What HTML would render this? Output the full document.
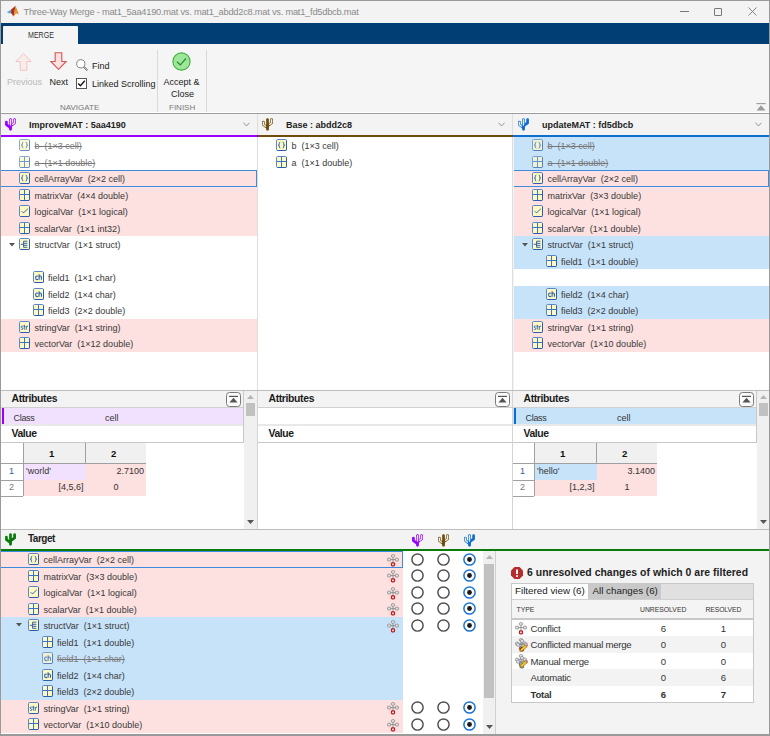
<!DOCTYPE html>
<html><head><meta charset="utf-8">
<style>
html,body{margin:0;padding:0;}
body{width:770px;height:736px;position:relative;overflow:hidden;background:#f3f3f3;font-family:"Liberation Sans", sans-serif;}
.t{position:absolute;white-space:pre;font-size:9px;line-height:12px;color:#222;}
.ab{position:absolute;}
.row{position:absolute;height:16.5px;}
.strike{text-decoration:line-through;color:#6a6a6a;}
</style></head><body>

<div style="position:absolute;left:0px;top:0px;width:770px;height:23px;background:#f3f3f3;"></div>
<div class="t" style="left:23.5px;top:6px;font-size:9.3px;color:#8a8a8a;letter-spacing:-0.245px;">Three-Way Merge - mat1_5aa4190.mat vs. mat1_abdd2c8.mat vs. mat1_fd5dbcb.mat</div>
<svg class="ab" style="left:6px;top:5px" width="14" height="13" viewBox="0 0 14 13">
<path d="M0.8 7.2 L5.2 4.6 L7 7.2 L3.6 8.6 Z" fill="#5aa8e8"/>
<path d="M5.2 4.6 L9.6 0.7 L7.6 11.6 L5 8 Z" fill="#a8321a"/>
<path d="M9.6 0.7 L12.8 9.6 L10 8.2 L7.6 11.6 Z" fill="#ec8a24"/>
</svg>
<div style="position:absolute;left:679.5px;top:11px;width:9px;height:1px;background:#777;"></div>
<div style="position:absolute;left:714px;top:7.5px;width:8px;height:8px;border:1px solid #777;box-sizing:border-box;border-radius:1px;"></div>
<svg class="ab" style="left:747.5px;top:7px" width="9" height="9" viewBox="0 0 9 9"><path d="M0.5 0.5 L8.5 8.5 M8.5 0.5 L0.5 8.5" stroke="#777" stroke-width="0.9"/></svg>
<div style="position:absolute;left:1px;top:23px;width:769px;height:21px;background:#003e74;"></div>
<div style="position:absolute;left:3px;top:25.5px;width:75px;height:19px;background:#f5f5f5;border-radius:1px 1px 0 0;"></div>
<div class="t" style="left:28px;top:28.5px;font-size:9.2px;color:#333;display:inline-block;transform:scaleX(0.77);transform-origin:0 0;">MERGE</div>
<div style="position:absolute;left:1px;top:44px;width:769px;height:69px;background:#f5f5f5;"></div>
<div style="position:absolute;left:157px;top:50px;width:1px;height:63px;background:#d9d9d9;"></div>
<div style="position:absolute;left:206px;top:50px;width:1px;height:63px;background:#d9d9d9;"></div>
<div style="position:absolute;left:0px;top:113px;width:770px;height:1px;background:#9c9c9c;"></div>
<div style="position:absolute;left:0px;top:112px;width:770px;height:1px;background:#ffffff;"></div>
<svg class="ab" style="left:15px;top:53px" width="17" height="18" viewBox="0 0 17 18">
<path d="M8.5 0.7 L16.2 8.5 H11.8 V17.3 H5.2 V8.5 H0.8 Z" fill="#fbecec" stroke="#f0c4c4" stroke-width="1"/></svg>
<svg class="ab" style="left:50px;top:52px" width="17" height="18" viewBox="0 0 17 18">
<path d="M8.5 17.3 L16.2 9.5 H11.8 V0.7 H5.2 V9.5 H0.8 Z" fill="#fde1e1" stroke="#d45656" stroke-width="1.1"/></svg>
<div class="t" style="left:7px;top:76px;color:#b9b9b9;">Previous</div>
<div class="t" style="left:49.5px;top:76px;color:#222;">Next</div>
<svg class="ab" style="left:75.5px;top:59px" width="13" height="13" viewBox="0 0 13 13">
<circle cx="4.8" cy="4.8" r="4.1" fill="#fff" stroke="#777" stroke-width="0.9"/><path d="M7.8 7.8 L11.3 11.3" stroke="#666" stroke-width="1.8"/><path d="M7.8 7.8 L11.3 11.3" stroke="#fff" stroke-width="0.6"/></svg>
<div class="t" style="left:92px;top:60px;color:#222;">Find</div>
<svg class="ab" style="left:76px;top:78px" width="11" height="11" viewBox="0 0 11 11">
<rect x="0.5" y="0.5" width="10" height="10" fill="#fff" stroke="#555"/><path d="M2.2 5.5 L4.4 7.8 L8.8 2.8" fill="none" stroke="#111" stroke-width="1.3"/></svg>
<div class="t" style="left:92px;top:77.5px;color:#222;">Linked Scrolling</div>
<div class="t" style="left:60px;top:102px;font-size:8px;color:#777;">NAVIGATE</div>
<svg class="ab" style="left:172px;top:52px" width="19" height="19" viewBox="0 0 19 19">
<circle cx="9.5" cy="9.5" r="8.6" fill="#9ee69a" stroke="#3bb03a" stroke-width="1.1"/><path d="M5 9.8 L8.3 13 L14 6.5" fill="none" stroke="#2a8a2a" stroke-width="1.2"/></svg>
<div class="t" style="left:163.5px;top:75.5px;color:#222;">Accept &amp;</div>
<div class="t" style="left:171px;top:88px;color:#222;">Close</div>
<div class="t" style="left:169px;top:102px;font-size:8px;color:#777;">FINISH</div>
<svg class="ab" style="left:755.5px;top:103px" width="10" height="8" viewBox="0 0 10 8">
<path d="M0.3 0.6 H9.7" stroke="#9a9a9a" stroke-width="1.1"/><path d="M5 2.2 L9.5 7.6 H0.5 Z" fill="#9a9a9a"/></svg>
<div style="position:absolute;left:1px;top:114px;width:256px;height:21px;background:#f3f3f3;"></div>
<div class="ab" style="left:5.3px;top:117px"><svg width="11" height="13" viewBox="0 0 11 13" style="overflow:visible"><path d="M5.5 1.6 V11.3" stroke="#9900ff" stroke-width="2.7" stroke-linecap="round" fill="none"/><path d="M1.4 4.0 V6.6 L5.5 9.6" stroke="#9900ff" stroke-width="2.7" stroke-linecap="round" stroke-linejoin="round" fill="none"/><path d="M9.6 1.6 V4.9 L5.5 7.8" stroke="#9900ff" stroke-width="2.7" stroke-linecap="round" stroke-linejoin="round" fill="none"/><path d="M5.5 1.7 V7.0" stroke="#f0e0ff" stroke-width="1.35" stroke-linecap="round" fill="none"/><path d="M9.6 1.7 V4.9 L7.6 6.4" stroke="#f0e0ff" stroke-width="1.35" stroke-linecap="round" fill="none"/></svg></div>
<div class="t" style="left:29px;top:119px;font-weight:bold;font-size:9px;color:#222;">ImproveMAT : 5aa4190</div>
<svg class="ab" style="left:243px;top:121.5px" width="7" height="5" viewBox="0 0 7 5"><path d="M0.4 0.7 L3.5 4.0 L6.6 0.7" fill="none" stroke="#8a8a8a" stroke-width="0.9"/></svg>
<div style="position:absolute;left:258px;top:114px;width:254px;height:21px;background:#f3f3f3;"></div>
<div class="ab" style="left:262.3px;top:117px"><svg width="11" height="13" viewBox="0 0 11 13" style="overflow:visible"><path d="M5.5 1.6 V11.3" stroke="#6e4c0e" stroke-width="2.7" stroke-linecap="round" fill="none"/><path d="M1.4 4.0 V6.6 L5.5 9.6" stroke="#6e4c0e" stroke-width="2.7" stroke-linecap="round" stroke-linejoin="round" fill="none"/><path d="M9.6 1.6 V4.9 L5.5 7.8" stroke="#6e4c0e" stroke-width="2.7" stroke-linecap="round" stroke-linejoin="round" fill="none"/><path d="M1.4 4.1 V6.6 L3.5 8.2" stroke="#f8f2e6" stroke-width="1.35" stroke-linecap="round" fill="none"/><path d="M9.6 1.7 V4.9 L7.6 6.4" stroke="#f8f2e6" stroke-width="1.35" stroke-linecap="round" fill="none"/></svg></div>
<div class="t" style="left:286px;top:119px;font-weight:bold;font-size:9px;color:#222;">Base : abdd2c8</div>
<svg class="ab" style="left:498px;top:121.5px" width="7" height="5" viewBox="0 0 7 5"><path d="M0.4 0.7 L3.5 4.0 L6.6 0.7" fill="none" stroke="#8a8a8a" stroke-width="0.9"/></svg>
<div style="position:absolute;left:514px;top:114px;width:255px;height:21px;background:#f3f3f3;"></div>
<div class="ab" style="left:518.3px;top:117px"><svg width="11" height="13" viewBox="0 0 11 13" style="overflow:visible"><path d="M5.5 1.6 V11.3" stroke="#0e6ecd" stroke-width="2.7" stroke-linecap="round" fill="none"/><path d="M1.4 4.0 V6.6 L5.5 9.6" stroke="#0e6ecd" stroke-width="2.7" stroke-linecap="round" stroke-linejoin="round" fill="none"/><path d="M9.6 1.6 V4.9 L5.5 7.8" stroke="#0e6ecd" stroke-width="2.7" stroke-linecap="round" stroke-linejoin="round" fill="none"/><path d="M5.5 1.7 V7.0" stroke="#e6f0ff" stroke-width="1.35" stroke-linecap="round" fill="none"/><path d="M1.4 4.1 V6.6 L3.5 8.2" stroke="#e6f0ff" stroke-width="1.35" stroke-linecap="round" fill="none"/></svg></div>
<div class="t" style="left:542px;top:119px;font-weight:bold;font-size:9px;color:#222;">updateMAT : fd5dbcb</div>
<svg class="ab" style="left:755px;top:121.5px" width="7" height="5" viewBox="0 0 7 5"><path d="M0.4 0.7 L3.5 4.0 L6.6 0.7" fill="none" stroke="#8a8a8a" stroke-width="0.9"/></svg>
<div style="position:absolute;left:1px;top:135px;width:256.5px;height:2px;background:#9900ff;"></div>
<div style="position:absolute;left:257.5px;top:135px;width:255.5px;height:2px;background:#6e4c0e;"></div>
<div style="position:absolute;left:513px;top:135px;width:256px;height:2px;background:#0e6ecd;"></div>
<div style="position:absolute;left:257px;top:114px;width:1px;height:21px;background:#dedede;"></div>
<div style="position:absolute;left:512px;top:114px;width:1px;height:21px;background:#dedede;"></div>
<div style="position:absolute;left:257px;top:137px;width:1px;height:253px;background:#dedede;"></div>
<div style="position:absolute;left:512px;top:137px;width:1px;height:253px;background:#dedede;"></div>
<div style="position:absolute;left:1px;top:137px;width:256px;height:253px;background:#fff;"></div>
<div style="position:absolute;left:258px;top:137px;width:254px;height:253px;background:#fff;"></div>
<div style="position:absolute;left:514px;top:137px;width:256px;height:253px;background:#fff;"></div>
<div class="ab" style="left:19px;top:139px;line-height:0"><svg width="11" height="12" viewBox="0 0 11 12" style="opacity:0.72;display:block"><rect x="0.5" y="0.5" width="10" height="11" rx="1.2" fill="#fdf9c0" stroke="#5b86cc" stroke-width="1"/><path d="M10.5 1.5 V10.5 Q10.5 11.5 9.5 11.5 H1.5" fill="none" stroke="#2a5cb0" stroke-width="1"/><path d="M4.3 3.2 Q3.3 3.2 3.3 4.3 V5.3 Q3.3 6.1 2.3 6.1 Q3.3 6.1 3.3 6.9 V7.9 Q3.3 9.0 4.3 9.0 M6.7 3.2 Q7.7 3.2 7.7 4.3 V5.3 Q7.7 6.1 8.7 6.1 Q7.7 6.1 7.7 6.9 V7.9 Q7.7 9.0 6.7 9.0" fill="none" stroke="#2a5cb0" stroke-width="0.95"/></svg></div>
<div class="t strike" style="left:34.5px;top:140.0px;color:#777">b  (1×3 cell)</div>
<div class="ab" style="left:19px;top:156px;line-height:0"><svg width="11" height="12" viewBox="0 0 11 12" style="opacity:0.72;display:block"><rect x="0.5" y="0.5" width="10" height="11" rx="1.2" fill="#fdf9c0" stroke="#5b86cc" stroke-width="1"/><path d="M10.5 1.5 V10.5 Q10.5 11.5 9.5 11.5 H1.5" fill="none" stroke="#2a5cb0" stroke-width="1"/><path d="M5.5 1 V11 M1 5.5 H10" stroke="#3a74c8" stroke-width="1"/></svg></div>
<div class="t strike" style="left:34.5px;top:156.5px;color:#777">a  (1×1 double)</div>
<div class="row" style="left:1px;top:170.0px;width:256px;background:#fde0e0;"></div>
<div class="row" style="left:1px;top:170.0px;width:256px;box-sizing:border-box;border:1px solid #3b8be0;border-left:none;"></div>
<div class="ab" style="left:19px;top:172px;line-height:0"><svg width="11" height="12" viewBox="0 0 11 12" style="opacity:1;display:block"><rect x="0.5" y="0.5" width="10" height="11" rx="1.2" fill="#fdf9c0" stroke="#5b86cc" stroke-width="1"/><path d="M10.5 1.5 V10.5 Q10.5 11.5 9.5 11.5 H1.5" fill="none" stroke="#2a5cb0" stroke-width="1"/><path d="M4.3 3.2 Q3.3 3.2 3.3 4.3 V5.3 Q3.3 6.1 2.3 6.1 Q3.3 6.1 3.3 6.9 V7.9 Q3.3 9.0 4.3 9.0 M6.7 3.2 Q7.7 3.2 7.7 4.3 V5.3 Q7.7 6.1 8.7 6.1 Q7.7 6.1 7.7 6.9 V7.9 Q7.7 9.0 6.7 9.0" fill="none" stroke="#2a5cb0" stroke-width="0.95"/></svg></div>
<div class="t " style="left:34.5px;top:173.0px;color:#383838">cellArrayVar  (2×2 cell)</div>
<div class="row" style="left:1px;top:186.5px;width:256px;background:#fde0e0;"></div>
<div class="ab" style="left:19px;top:189px;line-height:0"><svg width="11" height="12" viewBox="0 0 11 12" style="opacity:1;display:block"><rect x="0.5" y="0.5" width="10" height="11" rx="1.2" fill="#fdf9c0" stroke="#5b86cc" stroke-width="1"/><path d="M10.5 1.5 V10.5 Q10.5 11.5 9.5 11.5 H1.5" fill="none" stroke="#2a5cb0" stroke-width="1"/><path d="M5.5 1 V11 M1 5.5 H10" stroke="#3a74c8" stroke-width="1"/></svg></div>
<div class="t " style="left:34.5px;top:189.5px;color:#383838">matrixVar  (4×4 double)</div>
<div class="row" style="left:1px;top:203.0px;width:256px;background:#fde0e0;"></div>
<div class="ab" style="left:19px;top:205px;line-height:0"><svg width="11" height="12" viewBox="0 0 11 12" style="opacity:1;display:block"><rect x="0.5" y="0.5" width="10" height="11" rx="1.2" fill="#fdf9c0" stroke="#5b86cc" stroke-width="1"/><path d="M10.5 1.5 V10.5 Q10.5 11.5 9.5 11.5 H1.5" fill="none" stroke="#2a5cb0" stroke-width="1"/><path d="M2.6 6.2 Q3.8 7.8 4.8 7.6 L8.8 3.8" fill="none" stroke="#2a5cb0" stroke-width="0.95"/></svg></div>
<div class="t " style="left:34.5px;top:206.0px;color:#383838">logicalVar  (1×1 logical)</div>
<div class="row" style="left:1px;top:219.5px;width:256px;background:#fde0e0;"></div>
<div class="ab" style="left:19px;top:222px;line-height:0"><svg width="11" height="12" viewBox="0 0 11 12" style="opacity:1;display:block"><rect x="0.5" y="0.5" width="10" height="11" rx="1.2" fill="#fdf9c0" stroke="#5b86cc" stroke-width="1"/><path d="M10.5 1.5 V10.5 Q10.5 11.5 9.5 11.5 H1.5" fill="none" stroke="#2a5cb0" stroke-width="1"/><path d="M5.5 1 V11 M1 5.5 H10" stroke="#3a74c8" stroke-width="1"/></svg></div>
<div class="t " style="left:34.5px;top:222.5px;color:#383838">scalarVar  (1×1 int32)</div>
<div class="ab" style="left:19px;top:238px;line-height:0"><svg width="11" height="12" viewBox="0 0 11 12" style="opacity:1;display:block"><rect x="0.5" y="0.5" width="10" height="11" rx="1.2" fill="#fdf9c0" stroke="#5b86cc" stroke-width="1"/><path d="M10.5 1.5 V10.5 Q10.5 11.5 9.5 11.5 H1.5" fill="none" stroke="#2a5cb0" stroke-width="1"/><path d="M4.6 3.2 V9.3 M4.6 3.2 H8.4 M4.6 5.3 H8.4 M4.6 7.3 H8.4 M4.6 9.3 H8.4 M1.8 6.3 H4.6" fill="none" stroke="#2a5cb0" stroke-width="0.95"/></svg></div>
<div class="ab" style="left:9px;top:243.0px;line-height:0"><svg width="6" height="3.5" viewBox="0 0 6 3.5" style="display:block"><path d="M0 0 H6 L3 3.5 Z" fill="#555"/></svg></div>
<div class="t " style="left:34.5px;top:239.0px;color:#383838">structVar  (1×1 struct)</div>
<div class="ab" style="left:32.5px;top:271px;line-height:0"><svg width="11" height="12" viewBox="0 0 11 12" style="opacity:1;display:block"><rect x="0.5" y="0.5" width="10" height="11" rx="1.2" fill="#fdf9c0" stroke="#5b86cc" stroke-width="1"/><path d="M10.5 1.5 V10.5 Q10.5 11.5 9.5 11.5 H1.5" fill="none" stroke="#2a5cb0" stroke-width="1"/><path d="M5 5.5 Q4.6 5.0 3.9 5.0 Q2.6 5.0 2.6 6.8 Q2.6 8.6 3.9 8.6 Q4.6 8.6 5 8.1 M6.1 3.3 V8.7 M6.1 6.0 Q6.5 5.0 7.4 5.0 Q8.4 5.0 8.4 6.2 V8.7" fill="none" stroke="#2a5cb0" stroke-width="1.1"/></svg></div>
<div class="t " style="left:48.0px;top:272.0px;color:#383838">field1  (1×1 char)</div>
<div class="ab" style="left:32.5px;top:288px;line-height:0"><svg width="11" height="12" viewBox="0 0 11 12" style="opacity:1;display:block"><rect x="0.5" y="0.5" width="10" height="11" rx="1.2" fill="#fdf9c0" stroke="#5b86cc" stroke-width="1"/><path d="M10.5 1.5 V10.5 Q10.5 11.5 9.5 11.5 H1.5" fill="none" stroke="#2a5cb0" stroke-width="1"/><path d="M5 5.5 Q4.6 5.0 3.9 5.0 Q2.6 5.0 2.6 6.8 Q2.6 8.6 3.9 8.6 Q4.6 8.6 5 8.1 M6.1 3.3 V8.7 M6.1 6.0 Q6.5 5.0 7.4 5.0 Q8.4 5.0 8.4 6.2 V8.7" fill="none" stroke="#2a5cb0" stroke-width="1.1"/></svg></div>
<div class="t " style="left:48.0px;top:288.5px;color:#383838">field2  (1×4 char)</div>
<div class="ab" style="left:32.5px;top:304px;line-height:0"><svg width="11" height="12" viewBox="0 0 11 12" style="opacity:1;display:block"><rect x="0.5" y="0.5" width="10" height="11" rx="1.2" fill="#fdf9c0" stroke="#5b86cc" stroke-width="1"/><path d="M10.5 1.5 V10.5 Q10.5 11.5 9.5 11.5 H1.5" fill="none" stroke="#2a5cb0" stroke-width="1"/><path d="M5.5 1 V11 M1 5.5 H10" stroke="#3a74c8" stroke-width="1"/></svg></div>
<div class="t " style="left:48.0px;top:305.0px;color:#383838">field3  (2×2 double)</div>
<div class="row" style="left:1px;top:318.5px;width:256px;background:#fde0e0;"></div>
<div class="ab" style="left:19px;top:321px;line-height:0"><svg width="11" height="12" viewBox="0 0 11 12" style="opacity:1;display:block"><rect x="0.5" y="0.5" width="10" height="11" rx="1.2" fill="#fdf9c0" stroke="#5b86cc" stroke-width="1"/><path d="M10.5 1.5 V10.5 Q10.5 11.5 9.5 11.5 H1.5" fill="none" stroke="#2a5cb0" stroke-width="1"/><path d="M3.8 5.4 Q3.5 5.0 2.9 5.0 Q2.1 5.0 2.1 5.8 Q2.1 6.5 3.0 6.7 Q3.8 6.9 3.8 7.6 Q3.8 8.5 2.9 8.5 Q2.3 8.5 1.9 8.1 M5.3 3.8 V7.8 Q5.3 8.5 6.1 8.4 M4.5 5.2 H6.3 M7.3 5.0 V8.7 M7.3 6.3 Q7.7 5.0 9.0 5.0" fill="none" stroke="#2a5cb0" stroke-width="0.9"/></svg></div>
<div class="t " style="left:34.5px;top:321.5px;color:#383838">stringVar  (1×1 string)</div>
<div class="row" style="left:1px;top:335.0px;width:256px;background:#fde0e0;"></div>
<div class="ab" style="left:19px;top:337px;line-height:0"><svg width="11" height="12" viewBox="0 0 11 12" style="opacity:1;display:block"><rect x="0.5" y="0.5" width="10" height="11" rx="1.2" fill="#fdf9c0" stroke="#5b86cc" stroke-width="1"/><path d="M10.5 1.5 V10.5 Q10.5 11.5 9.5 11.5 H1.5" fill="none" stroke="#2a5cb0" stroke-width="1"/><path d="M5.5 1 V11 M1 5.5 H10" stroke="#3a74c8" stroke-width="1"/></svg></div>
<div class="t " style="left:34.5px;top:338.0px;color:#383838">vectorVar  (1×12 double)</div>
<div class="ab" style="left:276px;top:139px;line-height:0"><svg width="11" height="12" viewBox="0 0 11 12" style="opacity:1.0;display:block"><rect x="0.5" y="0.5" width="10" height="11" rx="1.2" fill="#fdf9c0" stroke="#5b86cc" stroke-width="1"/><path d="M10.5 1.5 V10.5 Q10.5 11.5 9.5 11.5 H1.5" fill="none" stroke="#2a5cb0" stroke-width="1"/><path d="M4.3 3.2 Q3.3 3.2 3.3 4.3 V5.3 Q3.3 6.1 2.3 6.1 Q3.3 6.1 3.3 6.9 V7.9 Q3.3 9.0 4.3 9.0 M6.7 3.2 Q7.7 3.2 7.7 4.3 V5.3 Q7.7 6.1 8.7 6.1 Q7.7 6.1 7.7 6.9 V7.9 Q7.7 9.0 6.7 9.0" fill="none" stroke="#2a5cb0" stroke-width="0.95"/></svg></div>
<div class="t " style="left:291.5px;top:140.0px;color:#383838">b  (1×3 cell)</div>
<div class="ab" style="left:276px;top:156px;line-height:0"><svg width="11" height="12" viewBox="0 0 11 12" style="opacity:1.0;display:block"><rect x="0.5" y="0.5" width="10" height="11" rx="1.2" fill="#fdf9c0" stroke="#5b86cc" stroke-width="1"/><path d="M10.5 1.5 V10.5 Q10.5 11.5 9.5 11.5 H1.5" fill="none" stroke="#2a5cb0" stroke-width="1"/><path d="M5.5 1 V11 M1 5.5 H10" stroke="#3a74c8" stroke-width="1"/></svg></div>
<div class="t " style="left:291.5px;top:156.5px;color:#383838">a  (1×1 double)</div>
<div class="row" style="left:514px;top:137.0px;width:255px;background:#c7e3fa;"></div>
<div class="ab" style="left:532px;top:139px;line-height:0"><svg width="11" height="12" viewBox="0 0 11 12" style="opacity:0.72;display:block"><rect x="0.5" y="0.5" width="10" height="11" rx="1.2" fill="#fdf9c0" stroke="#5b86cc" stroke-width="1"/><path d="M10.5 1.5 V10.5 Q10.5 11.5 9.5 11.5 H1.5" fill="none" stroke="#2a5cb0" stroke-width="1"/><path d="M4.3 3.2 Q3.3 3.2 3.3 4.3 V5.3 Q3.3 6.1 2.3 6.1 Q3.3 6.1 3.3 6.9 V7.9 Q3.3 9.0 4.3 9.0 M6.7 3.2 Q7.7 3.2 7.7 4.3 V5.3 Q7.7 6.1 8.7 6.1 Q7.7 6.1 7.7 6.9 V7.9 Q7.7 9.0 6.7 9.0" fill="none" stroke="#2a5cb0" stroke-width="0.95"/></svg></div>
<div class="t strike" style="left:547.5px;top:140.0px;color:#777">b  (1×3 cell)</div>
<div class="row" style="left:514px;top:153.5px;width:255px;background:#c7e3fa;"></div>
<div class="ab" style="left:532px;top:156px;line-height:0"><svg width="11" height="12" viewBox="0 0 11 12" style="opacity:0.72;display:block"><rect x="0.5" y="0.5" width="10" height="11" rx="1.2" fill="#fdf9c0" stroke="#5b86cc" stroke-width="1"/><path d="M10.5 1.5 V10.5 Q10.5 11.5 9.5 11.5 H1.5" fill="none" stroke="#2a5cb0" stroke-width="1"/><path d="M5.5 1 V11 M1 5.5 H10" stroke="#3a74c8" stroke-width="1"/></svg></div>
<div class="t strike" style="left:547.5px;top:156.5px;color:#777">a  (1×1 double)</div>
<div class="row" style="left:514px;top:170.0px;width:255px;background:#fde0e0;"></div>
<div class="row" style="left:514px;top:170.0px;width:255px;box-sizing:border-box;border:1px solid #3b8be0;border-left:none;"></div>
<div class="ab" style="left:532px;top:172px;line-height:0"><svg width="11" height="12" viewBox="0 0 11 12" style="opacity:1;display:block"><rect x="0.5" y="0.5" width="10" height="11" rx="1.2" fill="#fdf9c0" stroke="#5b86cc" stroke-width="1"/><path d="M10.5 1.5 V10.5 Q10.5 11.5 9.5 11.5 H1.5" fill="none" stroke="#2a5cb0" stroke-width="1"/><path d="M4.3 3.2 Q3.3 3.2 3.3 4.3 V5.3 Q3.3 6.1 2.3 6.1 Q3.3 6.1 3.3 6.9 V7.9 Q3.3 9.0 4.3 9.0 M6.7 3.2 Q7.7 3.2 7.7 4.3 V5.3 Q7.7 6.1 8.7 6.1 Q7.7 6.1 7.7 6.9 V7.9 Q7.7 9.0 6.7 9.0" fill="none" stroke="#2a5cb0" stroke-width="0.95"/></svg></div>
<div class="t " style="left:547.5px;top:173.0px;color:#383838">cellArrayVar  (2×2 cell)</div>
<div class="row" style="left:514px;top:186.5px;width:255px;background:#fde0e0;"></div>
<div class="ab" style="left:532px;top:189px;line-height:0"><svg width="11" height="12" viewBox="0 0 11 12" style="opacity:1;display:block"><rect x="0.5" y="0.5" width="10" height="11" rx="1.2" fill="#fdf9c0" stroke="#5b86cc" stroke-width="1"/><path d="M10.5 1.5 V10.5 Q10.5 11.5 9.5 11.5 H1.5" fill="none" stroke="#2a5cb0" stroke-width="1"/><path d="M5.5 1 V11 M1 5.5 H10" stroke="#3a74c8" stroke-width="1"/></svg></div>
<div class="t " style="left:547.5px;top:189.5px;color:#383838">matrixVar  (3×3 double)</div>
<div class="row" style="left:514px;top:203.0px;width:255px;background:#fde0e0;"></div>
<div class="ab" style="left:532px;top:205px;line-height:0"><svg width="11" height="12" viewBox="0 0 11 12" style="opacity:1;display:block"><rect x="0.5" y="0.5" width="10" height="11" rx="1.2" fill="#fdf9c0" stroke="#5b86cc" stroke-width="1"/><path d="M10.5 1.5 V10.5 Q10.5 11.5 9.5 11.5 H1.5" fill="none" stroke="#2a5cb0" stroke-width="1"/><path d="M2.6 6.2 Q3.8 7.8 4.8 7.6 L8.8 3.8" fill="none" stroke="#2a5cb0" stroke-width="0.95"/></svg></div>
<div class="t " style="left:547.5px;top:206.0px;color:#383838">logicalVar  (1×1 logical)</div>
<div class="row" style="left:514px;top:219.5px;width:255px;background:#fde0e0;"></div>
<div class="ab" style="left:532px;top:222px;line-height:0"><svg width="11" height="12" viewBox="0 0 11 12" style="opacity:1;display:block"><rect x="0.5" y="0.5" width="10" height="11" rx="1.2" fill="#fdf9c0" stroke="#5b86cc" stroke-width="1"/><path d="M10.5 1.5 V10.5 Q10.5 11.5 9.5 11.5 H1.5" fill="none" stroke="#2a5cb0" stroke-width="1"/><path d="M5.5 1 V11 M1 5.5 H10" stroke="#3a74c8" stroke-width="1"/></svg></div>
<div class="t " style="left:547.5px;top:222.5px;color:#383838">scalarVar  (1×1 double)</div>
<div class="row" style="left:514px;top:236.0px;width:255px;background:#c7e3fa;"></div>
<div class="ab" style="left:532px;top:238px;line-height:0"><svg width="11" height="12" viewBox="0 0 11 12" style="opacity:1;display:block"><rect x="0.5" y="0.5" width="10" height="11" rx="1.2" fill="#fdf9c0" stroke="#5b86cc" stroke-width="1"/><path d="M10.5 1.5 V10.5 Q10.5 11.5 9.5 11.5 H1.5" fill="none" stroke="#2a5cb0" stroke-width="1"/><path d="M4.6 3.2 V9.3 M4.6 3.2 H8.4 M4.6 5.3 H8.4 M4.6 7.3 H8.4 M4.6 9.3 H8.4 M1.8 6.3 H4.6" fill="none" stroke="#2a5cb0" stroke-width="0.95"/></svg></div>
<div class="ab" style="left:522px;top:243.0px;line-height:0"><svg width="6" height="3.5" viewBox="0 0 6 3.5" style="display:block"><path d="M0 0 H6 L3 3.5 Z" fill="#555"/></svg></div>
<div class="t " style="left:547.5px;top:239.0px;color:#383838">structVar  (1×1 struct)</div>
<div class="row" style="left:514px;top:252.5px;width:255px;background:#c7e3fa;"></div>
<div class="ab" style="left:545.5px;top:255px;line-height:0"><svg width="11" height="12" viewBox="0 0 11 12" style="opacity:1;display:block"><rect x="0.5" y="0.5" width="10" height="11" rx="1.2" fill="#fdf9c0" stroke="#5b86cc" stroke-width="1"/><path d="M10.5 1.5 V10.5 Q10.5 11.5 9.5 11.5 H1.5" fill="none" stroke="#2a5cb0" stroke-width="1"/><path d="M5.5 1 V11 M1 5.5 H10" stroke="#3a74c8" stroke-width="1"/></svg></div>
<div class="t " style="left:561.0px;top:255.5px;color:#383838">field1  (1×1 double)</div>
<div class="row" style="left:514px;top:285.5px;width:255px;background:#c7e3fa;"></div>
<div class="ab" style="left:545.5px;top:288px;line-height:0"><svg width="11" height="12" viewBox="0 0 11 12" style="opacity:1;display:block"><rect x="0.5" y="0.5" width="10" height="11" rx="1.2" fill="#fdf9c0" stroke="#5b86cc" stroke-width="1"/><path d="M10.5 1.5 V10.5 Q10.5 11.5 9.5 11.5 H1.5" fill="none" stroke="#2a5cb0" stroke-width="1"/><path d="M5 5.5 Q4.6 5.0 3.9 5.0 Q2.6 5.0 2.6 6.8 Q2.6 8.6 3.9 8.6 Q4.6 8.6 5 8.1 M6.1 3.3 V8.7 M6.1 6.0 Q6.5 5.0 7.4 5.0 Q8.4 5.0 8.4 6.2 V8.7" fill="none" stroke="#2a5cb0" stroke-width="1.1"/></svg></div>
<div class="t " style="left:561.0px;top:288.5px;color:#383838">field2  (1×4 char)</div>
<div class="row" style="left:514px;top:302.0px;width:255px;background:#c7e3fa;"></div>
<div class="ab" style="left:545.5px;top:304px;line-height:0"><svg width="11" height="12" viewBox="0 0 11 12" style="opacity:1;display:block"><rect x="0.5" y="0.5" width="10" height="11" rx="1.2" fill="#fdf9c0" stroke="#5b86cc" stroke-width="1"/><path d="M10.5 1.5 V10.5 Q10.5 11.5 9.5 11.5 H1.5" fill="none" stroke="#2a5cb0" stroke-width="1"/><path d="M5.5 1 V11 M1 5.5 H10" stroke="#3a74c8" stroke-width="1"/></svg></div>
<div class="t " style="left:561.0px;top:305.0px;color:#383838">field3  (2×2 double)</div>
<div class="row" style="left:514px;top:318.5px;width:255px;background:#fde0e0;"></div>
<div class="ab" style="left:532px;top:321px;line-height:0"><svg width="11" height="12" viewBox="0 0 11 12" style="opacity:1;display:block"><rect x="0.5" y="0.5" width="10" height="11" rx="1.2" fill="#fdf9c0" stroke="#5b86cc" stroke-width="1"/><path d="M10.5 1.5 V10.5 Q10.5 11.5 9.5 11.5 H1.5" fill="none" stroke="#2a5cb0" stroke-width="1"/><path d="M3.8 5.4 Q3.5 5.0 2.9 5.0 Q2.1 5.0 2.1 5.8 Q2.1 6.5 3.0 6.7 Q3.8 6.9 3.8 7.6 Q3.8 8.5 2.9 8.5 Q2.3 8.5 1.9 8.1 M5.3 3.8 V7.8 Q5.3 8.5 6.1 8.4 M4.5 5.2 H6.3 M7.3 5.0 V8.7 M7.3 6.3 Q7.7 5.0 9.0 5.0" fill="none" stroke="#2a5cb0" stroke-width="0.9"/></svg></div>
<div class="t " style="left:547.5px;top:321.5px;color:#383838">stringVar  (1×1 string)</div>
<div class="row" style="left:514px;top:335.0px;width:255px;background:#fde0e0;"></div>
<div class="ab" style="left:532px;top:337px;line-height:0"><svg width="11" height="12" viewBox="0 0 11 12" style="opacity:1;display:block"><rect x="0.5" y="0.5" width="10" height="11" rx="1.2" fill="#fdf9c0" stroke="#5b86cc" stroke-width="1"/><path d="M10.5 1.5 V10.5 Q10.5 11.5 9.5 11.5 H1.5" fill="none" stroke="#2a5cb0" stroke-width="1"/><path d="M5.5 1 V11 M1 5.5 H10" stroke="#3a74c8" stroke-width="1"/></svg></div>
<div class="t " style="left:547.5px;top:338.0px;color:#383838">vectorVar  (1×10 double)</div>
<div style="position:absolute;left:0px;top:390px;width:770px;height:1px;background:#bdbdbd;"></div>
<div style="position:absolute;left:1px;top:391px;width:769px;height:138px;background:#fff;"></div>
<div style="position:absolute;left:1px;top:391px;width:242px;height:16px;background:#f3f3f3;border-bottom:1px solid #d0d0d0;box-sizing:content-box;"></div>
<div class="t" style="left:11.5px;top:393.2px;font-weight:bold;font-size:10.4px;letter-spacing:-0.35px;color:#1a1a1a;">Attributes</div>
<svg class="ab" style="left:225.5px;top:392px" width="15" height="15" viewBox="0 0 15 15">
<rect x="0.5" y="0.5" width="14" height="14" rx="3" fill="#fbfbfb" stroke="#6b6b6b" stroke-width="0.9"/>
<path d="M3 4.4 H12" stroke="#555" stroke-width="1.2"/><path d="M7.5 5.8 L11.6 10.6 H3.4 Z" fill="#555"/></svg>
<div style="position:absolute;left:1px;top:408px;width:242px;height:16px;background:#f2e1fe;"></div>
<div style="position:absolute;left:2px;top:408px;width:2px;height:16px;background:#9900ff;"></div>
<div class="t" style="left:13.5px;top:411.5px;color:#333;letter-spacing:-0.3px;">Class</div>
<div class="t" style="left:105px;top:411.5px;color:#333;">cell</div>
<div style="position:absolute;left:1px;top:424px;width:242px;height:2px;background:#e8e8e8;"></div>
<div class="t" style="left:11.5px;top:427.5px;font-weight:bold;font-size:10.4px;letter-spacing:-0.4px;color:#1a1a1a;">Value</div>
<div style="position:absolute;left:1px;top:442px;width:242px;height:1px;background:#c8c8c8;"></div>
<div style="position:absolute;left:243px;top:391px;width:1px;height:52px;background:#c8c8c8;"></div>
<div style="position:absolute;left:244px;top:391px;width:13px;height:138px;background:#f0f0f0;"></div>
<svg class="ab" style="left:247.0px;top:395px" width="7" height="4" viewBox="0 0 7 4"><path d="M0 4 L3.5 0 L7 4 Z" fill="#b5b5b5"/></svg>
<svg class="ab" style="left:247.0px;top:520px" width="7" height="4" viewBox="0 0 7 4"><path d="M0 0 L3.5 4 L7 0 Z" fill="#555"/></svg>
<div style="position:absolute;left:245.5px;top:403px;width:9.5px;height:13px;background:#c1c1c1;"></div>
<div style="position:absolute;left:23px;top:443px;width:123px;height:20px;background:#f0f0f0;"></div>
<div style="position:absolute;left:23px;top:443px;width:1px;height:53px;background:#a0a0a0;"></div>
<div style="position:absolute;left:85px;top:443px;width:1px;height:20px;background:#a0a0a0;"></div>
<div style="position:absolute;left:1px;top:463px;width:145px;height:1px;background:#a0a0a0;"></div>
<div style="position:absolute;left:1px;top:479.5px;width:22px;height:1px;background:#a0a0a0;"></div>
<div style="position:absolute;left:1px;top:496px;width:22px;height:1px;background:#a0a0a0;"></div>
<div class="t" style="left:49px;top:448px;font-weight:bold;font-size:9.6px;color:#111;">1</div>
<div class="t" style="left:111px;top:448px;font-weight:bold;font-size:9.6px;color:#111;">2</div>
<div style="position:absolute;left:24px;top:464px;width:62px;height:15.5px;background:#f2e1fe;"></div>
<div style="position:absolute;left:86px;top:464px;width:60px;height:15.5px;background:#fde0e0;"></div>
<div style="position:absolute;left:24px;top:480px;width:122px;height:16px;background:#fde0e0;"></div>
<div class="t" style="left:9px;top:465px;color:#3a5a9a;">1</div>
<div class="t" style="left:9px;top:481px;color:#777;">2</div>
<div class="t" style="left:26px;top:464.5px;color:#333;">'world'</div>
<div class="t" style="right:626px;top:464.5px;color:#333;">2.7100</div>
<div class="t" style="right:686.5px;top:481px;color:#333;">[4,5,6]</div>
<div class="t" style="left:113.5px;top:481px;color:#333;">0</div>
<div style="position:absolute;left:258px;top:391px;width:254px;height:16px;background:#f3f3f3;border-bottom:1px solid #d0d0d0;box-sizing:content-box;"></div>
<div class="t" style="left:268.5px;top:393.2px;font-weight:bold;font-size:10.4px;letter-spacing:-0.35px;color:#1a1a1a;">Attributes</div>
<svg class="ab" style="left:494.5px;top:392px" width="15" height="15" viewBox="0 0 15 15">
<rect x="0.5" y="0.5" width="14" height="14" rx="3" fill="#fbfbfb" stroke="#6b6b6b" stroke-width="0.9"/>
<path d="M3 4.4 H12" stroke="#555" stroke-width="1.2"/><path d="M7.5 5.8 L11.6 10.6 H3.4 Z" fill="#555"/></svg>
<div style="position:absolute;left:258px;top:424px;width:254px;height:2px;background:#e8e8e8;"></div>
<div class="t" style="left:268.5px;top:427.5px;font-weight:bold;font-size:10.4px;letter-spacing:-0.4px;color:#1a1a1a;">Value</div>
<div style="position:absolute;left:258px;top:442px;width:254px;height:1px;background:#c8c8c8;"></div>
<div style="position:absolute;left:512px;top:391px;width:1px;height:52px;background:#c8c8c8;"></div>
<div style="position:absolute;left:513px;top:391px;width:243px;height:16px;background:#f3f3f3;border-bottom:1px solid #d0d0d0;box-sizing:content-box;"></div>
<div class="t" style="left:523.5px;top:393.2px;font-weight:bold;font-size:10.4px;letter-spacing:-0.35px;color:#1a1a1a;">Attributes</div>
<svg class="ab" style="left:738.5px;top:392px" width="15" height="15" viewBox="0 0 15 15">
<rect x="0.5" y="0.5" width="14" height="14" rx="3" fill="#fbfbfb" stroke="#6b6b6b" stroke-width="0.9"/>
<path d="M3 4.4 H12" stroke="#555" stroke-width="1.2"/><path d="M7.5 5.8 L11.6 10.6 H3.4 Z" fill="#555"/></svg>
<div style="position:absolute;left:513px;top:408px;width:243px;height:16px;background:#c7e3fa;"></div>
<div style="position:absolute;left:514px;top:408px;width:2px;height:16px;background:#0e6ecd;"></div>
<div class="t" style="left:525.5px;top:411.5px;color:#333;letter-spacing:-0.3px;">Class</div>
<div class="t" style="left:617px;top:411.5px;color:#333;">cell</div>
<div style="position:absolute;left:513px;top:424px;width:243px;height:2px;background:#e8e8e8;"></div>
<div class="t" style="left:523.5px;top:427.5px;font-weight:bold;font-size:10.4px;letter-spacing:-0.4px;color:#1a1a1a;">Value</div>
<div style="position:absolute;left:513px;top:442px;width:243px;height:1px;background:#c8c8c8;"></div>
<div style="position:absolute;left:756px;top:391px;width:1px;height:52px;background:#c8c8c8;"></div>
<div style="position:absolute;left:757px;top:391px;width:13px;height:138px;background:#f0f0f0;"></div>
<svg class="ab" style="left:760.0px;top:395px" width="7" height="4" viewBox="0 0 7 4"><path d="M0 4 L3.5 0 L7 4 Z" fill="#b5b5b5"/></svg>
<svg class="ab" style="left:760.0px;top:520px" width="7" height="4" viewBox="0 0 7 4"><path d="M0 0 L3.5 4 L7 0 Z" fill="#555"/></svg>
<div style="position:absolute;left:758.5px;top:403px;width:9.5px;height:13px;background:#c1c1c1;"></div>
<div style="position:absolute;left:534px;top:443px;width:123px;height:20px;background:#f0f0f0;"></div>
<div style="position:absolute;left:534px;top:443px;width:1px;height:53px;background:#a0a0a0;"></div>
<div style="position:absolute;left:596px;top:443px;width:1px;height:20px;background:#a0a0a0;"></div>
<div style="position:absolute;left:512px;top:463px;width:145px;height:1px;background:#a0a0a0;"></div>
<div style="position:absolute;left:512px;top:479.5px;width:22px;height:1px;background:#a0a0a0;"></div>
<div style="position:absolute;left:512px;top:496px;width:22px;height:1px;background:#a0a0a0;"></div>
<div class="t" style="left:560px;top:448px;font-weight:bold;font-size:9.6px;color:#111;">1</div>
<div class="t" style="left:622px;top:448px;font-weight:bold;font-size:9.6px;color:#111;">2</div>
<div style="position:absolute;left:535px;top:464px;width:62px;height:15.5px;background:#c7e3fa;"></div>
<div style="position:absolute;left:597px;top:464px;width:60px;height:15.5px;background:#fde0e0;"></div>
<div style="position:absolute;left:535px;top:480px;width:122px;height:16px;background:#fde0e0;"></div>
<div class="t" style="left:520px;top:465px;color:#3a5a9a;">1</div>
<div class="t" style="left:520px;top:481px;color:#777;">2</div>
<div class="t" style="left:537px;top:464.5px;color:#333;">'hello'</div>
<div class="t" style="right:115px;top:464.5px;color:#333;">3.1400</div>
<div class="t" style="right:175.5px;top:481px;color:#333;">[1,2,3]</div>
<div class="t" style="left:624.5px;top:481px;color:#333;">1</div>
<div style="position:absolute;left:257px;top:391px;width:1px;height:138px;background:#d4d4d4;"></div>
<div style="position:absolute;left:512px;top:391px;width:1px;height:138px;background:#d4d4d4;"></div>
<div style="position:absolute;left:0px;top:529px;width:770px;height:1px;background:#bdbdbd;"></div>
<div style="position:absolute;left:1px;top:530px;width:769px;height:19px;background:#f3f3f3;"></div>
<div class="ab" style="left:5px;top:532px"><svg width="11" height="13" viewBox="0 0 11 13" style="overflow:visible"><path d="M5.5 1.6 V11.3" stroke="#0a7a0a" stroke-width="2.7" stroke-linecap="round" fill="none"/><path d="M1.4 4.0 V6.6 L5.5 9.6" stroke="#0a7a0a" stroke-width="2.7" stroke-linecap="round" stroke-linejoin="round" fill="none"/><path d="M9.6 1.6 V4.9 L5.5 7.8" stroke="#0a7a0a" stroke-width="2.7" stroke-linecap="round" stroke-linejoin="round" fill="none"/></svg></div>
<div class="t" style="left:28px;top:533px;font-weight:bold;font-size:10px;letter-spacing:-0.5px;color:#222;">Target</div>
<div class="ab" style="left:412px;top:532.5px"><svg width="11" height="13" viewBox="0 0 11 13" style="overflow:visible"><path d="M5.5 1.6 V11.3" stroke="#9900ff" stroke-width="2.7" stroke-linecap="round" fill="none"/><path d="M1.4 4.0 V6.6 L5.5 9.6" stroke="#9900ff" stroke-width="2.7" stroke-linecap="round" stroke-linejoin="round" fill="none"/><path d="M9.6 1.6 V4.9 L5.5 7.8" stroke="#9900ff" stroke-width="2.7" stroke-linecap="round" stroke-linejoin="round" fill="none"/><path d="M5.5 1.7 V7.0" stroke="#f0e0ff" stroke-width="1.35" stroke-linecap="round" fill="none"/><path d="M9.6 1.7 V4.9 L7.6 6.4" stroke="#f0e0ff" stroke-width="1.35" stroke-linecap="round" fill="none"/></svg></div>
<div class="ab" style="left:437.5px;top:532.5px"><svg width="11" height="13" viewBox="0 0 11 13" style="overflow:visible"><path d="M5.5 1.6 V11.3" stroke="#6e4c0e" stroke-width="2.7" stroke-linecap="round" fill="none"/><path d="M1.4 4.0 V6.6 L5.5 9.6" stroke="#6e4c0e" stroke-width="2.7" stroke-linecap="round" stroke-linejoin="round" fill="none"/><path d="M9.6 1.6 V4.9 L5.5 7.8" stroke="#6e4c0e" stroke-width="2.7" stroke-linecap="round" stroke-linejoin="round" fill="none"/><path d="M1.4 4.1 V6.6 L3.5 8.2" stroke="#f8f2e6" stroke-width="1.35" stroke-linecap="round" fill="none"/><path d="M9.6 1.7 V4.9 L7.6 6.4" stroke="#f8f2e6" stroke-width="1.35" stroke-linecap="round" fill="none"/></svg></div>
<div class="ab" style="left:464px;top:532.5px"><svg width="11" height="13" viewBox="0 0 11 13" style="overflow:visible"><path d="M5.5 1.6 V11.3" stroke="#0e6ecd" stroke-width="2.7" stroke-linecap="round" fill="none"/><path d="M1.4 4.0 V6.6 L5.5 9.6" stroke="#0e6ecd" stroke-width="2.7" stroke-linecap="round" stroke-linejoin="round" fill="none"/><path d="M9.6 1.6 V4.9 L5.5 7.8" stroke="#0e6ecd" stroke-width="2.7" stroke-linecap="round" stroke-linejoin="round" fill="none"/><path d="M5.5 1.7 V7.0" stroke="#e6f0ff" stroke-width="1.35" stroke-linecap="round" fill="none"/><path d="M1.4 4.1 V6.6 L3.5 8.2" stroke="#e6f0ff" stroke-width="1.35" stroke-linecap="round" fill="none"/></svg></div>
<div style="position:absolute;left:1px;top:551px;width:483px;height:183px;background:#fff;"></div>
<div class="row" style="left:1px;top:551.0px;width:402px;background:#fde0e0;"></div>
<div class="row" style="left:1px;top:551.0px;width:402px;box-sizing:border-box;border:1px solid #3b8be0;border-left:none;"></div>
<div class="ab" style="left:28px;top:553px;line-height:0"><svg width="11" height="12" viewBox="0 0 11 12" style="opacity:1;display:block"><rect x="0.5" y="0.5" width="10" height="11" rx="1.2" fill="#fdf9c0" stroke="#5b86cc" stroke-width="1"/><path d="M10.5 1.5 V10.5 Q10.5 11.5 9.5 11.5 H1.5" fill="none" stroke="#2a5cb0" stroke-width="1"/><path d="M4.3 3.2 Q3.3 3.2 3.3 4.3 V5.3 Q3.3 6.1 2.3 6.1 Q3.3 6.1 3.3 6.9 V7.9 Q3.3 9.0 4.3 9.0 M6.7 3.2 Q7.7 3.2 7.7 4.3 V5.3 Q7.7 6.1 8.7 6.1 Q7.7 6.1 7.7 6.9 V7.9 Q7.7 9.0 6.7 9.0" fill="none" stroke="#2a5cb0" stroke-width="0.95"/></svg></div>
<div class="t " style="left:43.5px;top:554.0px;color:#383838">cellArrayVar  (2×2 cell)</div>
<svg class="ab" style="left:387px;top:553.5px" width="12" height="13" viewBox="0 0 12 13"><path d="M6 3.1 V8.9 M3.5 5.6 H8.5" stroke="#8a8a8a" stroke-width="0.9"/><rect x="4.4" y="0.7" width="3.2" height="2.5" rx="0.9" fill="#e6e6e6" stroke="#8a8a8a" stroke-width="0.9"/><rect x="0.6" y="4.2" width="3" height="2.8" rx="0.9" fill="#e6e6e6" stroke="#8a8a8a" stroke-width="0.9"/><rect x="8.4" y="4.2" width="3" height="2.8" rx="0.9" fill="#e6e6e6" stroke="#8a8a8a" stroke-width="0.9"/><rect x="4.4" y="8.9" width="3.2" height="3" rx="0.9" fill="#f6c8c8" stroke="#b51d1d" stroke-width="1.1"/></svg>
<svg class="ab" style="left:410.5px;top:552.5px" width="13" height="13" viewBox="0 0 13 13"><circle cx="6.5" cy="6.5" r="5.6" fill="#fff" stroke="#4e4e4e" stroke-width="1.45"/></svg>
<svg class="ab" style="left:436.5px;top:552.5px" width="13" height="13" viewBox="0 0 13 13"><circle cx="6.5" cy="6.5" r="5.6" fill="#fff" stroke="#4e4e4e" stroke-width="1.45"/></svg>
<svg class="ab" style="left:463.0px;top:552.5px" width="13" height="13" viewBox="0 0 13 13"><circle cx="6.5" cy="6.5" r="5.6" fill="#fff" stroke="#1a74d0" stroke-width="1.5"/><circle cx="6.5" cy="6.5" r="2.4" fill="#1a1a1a"/></svg>
<div class="row" style="left:1px;top:567.5px;width:402px;background:#fde0e0;"></div>
<div class="ab" style="left:28px;top:570px;line-height:0"><svg width="11" height="12" viewBox="0 0 11 12" style="opacity:1;display:block"><rect x="0.5" y="0.5" width="10" height="11" rx="1.2" fill="#fdf9c0" stroke="#5b86cc" stroke-width="1"/><path d="M10.5 1.5 V10.5 Q10.5 11.5 9.5 11.5 H1.5" fill="none" stroke="#2a5cb0" stroke-width="1"/><path d="M5.5 1 V11 M1 5.5 H10" stroke="#3a74c8" stroke-width="1"/></svg></div>
<div class="t " style="left:43.5px;top:570.5px;color:#383838">matrixVar  (3×3 double)</div>
<svg class="ab" style="left:387px;top:570.0px" width="12" height="13" viewBox="0 0 12 13"><path d="M6 3.1 V8.9 M3.5 5.6 H8.5" stroke="#8a8a8a" stroke-width="0.9"/><rect x="4.4" y="0.7" width="3.2" height="2.5" rx="0.9" fill="#e6e6e6" stroke="#8a8a8a" stroke-width="0.9"/><rect x="0.6" y="4.2" width="3" height="2.8" rx="0.9" fill="#e6e6e6" stroke="#8a8a8a" stroke-width="0.9"/><rect x="8.4" y="4.2" width="3" height="2.8" rx="0.9" fill="#e6e6e6" stroke="#8a8a8a" stroke-width="0.9"/><rect x="4.4" y="8.9" width="3.2" height="3" rx="0.9" fill="#f6c8c8" stroke="#b51d1d" stroke-width="1.1"/></svg>
<svg class="ab" style="left:410.5px;top:569.0px" width="13" height="13" viewBox="0 0 13 13"><circle cx="6.5" cy="6.5" r="5.6" fill="#fff" stroke="#4e4e4e" stroke-width="1.45"/></svg>
<svg class="ab" style="left:436.5px;top:569.0px" width="13" height="13" viewBox="0 0 13 13"><circle cx="6.5" cy="6.5" r="5.6" fill="#fff" stroke="#4e4e4e" stroke-width="1.45"/></svg>
<svg class="ab" style="left:463.0px;top:569.0px" width="13" height="13" viewBox="0 0 13 13"><circle cx="6.5" cy="6.5" r="5.6" fill="#fff" stroke="#1a74d0" stroke-width="1.5"/><circle cx="6.5" cy="6.5" r="2.4" fill="#1a1a1a"/></svg>
<div class="row" style="left:1px;top:584.0px;width:402px;background:#fde0e0;"></div>
<div class="ab" style="left:28px;top:586px;line-height:0"><svg width="11" height="12" viewBox="0 0 11 12" style="opacity:1;display:block"><rect x="0.5" y="0.5" width="10" height="11" rx="1.2" fill="#fdf9c0" stroke="#5b86cc" stroke-width="1"/><path d="M10.5 1.5 V10.5 Q10.5 11.5 9.5 11.5 H1.5" fill="none" stroke="#2a5cb0" stroke-width="1"/><path d="M2.6 6.2 Q3.8 7.8 4.8 7.6 L8.8 3.8" fill="none" stroke="#2a5cb0" stroke-width="0.95"/></svg></div>
<div class="t " style="left:43.5px;top:587.0px;color:#383838">logicalVar  (1×1 logical)</div>
<svg class="ab" style="left:387px;top:586.5px" width="12" height="13" viewBox="0 0 12 13"><path d="M6 3.1 V8.9 M3.5 5.6 H8.5" stroke="#8a8a8a" stroke-width="0.9"/><rect x="4.4" y="0.7" width="3.2" height="2.5" rx="0.9" fill="#e6e6e6" stroke="#8a8a8a" stroke-width="0.9"/><rect x="0.6" y="4.2" width="3" height="2.8" rx="0.9" fill="#e6e6e6" stroke="#8a8a8a" stroke-width="0.9"/><rect x="8.4" y="4.2" width="3" height="2.8" rx="0.9" fill="#e6e6e6" stroke="#8a8a8a" stroke-width="0.9"/><rect x="4.4" y="8.9" width="3.2" height="3" rx="0.9" fill="#f6c8c8" stroke="#b51d1d" stroke-width="1.1"/></svg>
<svg class="ab" style="left:410.5px;top:585.5px" width="13" height="13" viewBox="0 0 13 13"><circle cx="6.5" cy="6.5" r="5.6" fill="#fff" stroke="#4e4e4e" stroke-width="1.45"/></svg>
<svg class="ab" style="left:436.5px;top:585.5px" width="13" height="13" viewBox="0 0 13 13"><circle cx="6.5" cy="6.5" r="5.6" fill="#fff" stroke="#4e4e4e" stroke-width="1.45"/></svg>
<svg class="ab" style="left:463.0px;top:585.5px" width="13" height="13" viewBox="0 0 13 13"><circle cx="6.5" cy="6.5" r="5.6" fill="#fff" stroke="#1a74d0" stroke-width="1.5"/><circle cx="6.5" cy="6.5" r="2.4" fill="#1a1a1a"/></svg>
<div class="row" style="left:1px;top:600.5px;width:402px;background:#fde0e0;"></div>
<div class="ab" style="left:28px;top:603px;line-height:0"><svg width="11" height="12" viewBox="0 0 11 12" style="opacity:1;display:block"><rect x="0.5" y="0.5" width="10" height="11" rx="1.2" fill="#fdf9c0" stroke="#5b86cc" stroke-width="1"/><path d="M10.5 1.5 V10.5 Q10.5 11.5 9.5 11.5 H1.5" fill="none" stroke="#2a5cb0" stroke-width="1"/><path d="M5.5 1 V11 M1 5.5 H10" stroke="#3a74c8" stroke-width="1"/></svg></div>
<div class="t " style="left:43.5px;top:603.5px;color:#383838">scalarVar  (1×1 double)</div>
<svg class="ab" style="left:387px;top:603.0px" width="12" height="13" viewBox="0 0 12 13"><path d="M6 3.1 V8.9 M3.5 5.6 H8.5" stroke="#8a8a8a" stroke-width="0.9"/><rect x="4.4" y="0.7" width="3.2" height="2.5" rx="0.9" fill="#e6e6e6" stroke="#8a8a8a" stroke-width="0.9"/><rect x="0.6" y="4.2" width="3" height="2.8" rx="0.9" fill="#e6e6e6" stroke="#8a8a8a" stroke-width="0.9"/><rect x="8.4" y="4.2" width="3" height="2.8" rx="0.9" fill="#e6e6e6" stroke="#8a8a8a" stroke-width="0.9"/><rect x="4.4" y="8.9" width="3.2" height="3" rx="0.9" fill="#f6c8c8" stroke="#b51d1d" stroke-width="1.1"/></svg>
<svg class="ab" style="left:410.5px;top:602.0px" width="13" height="13" viewBox="0 0 13 13"><circle cx="6.5" cy="6.5" r="5.6" fill="#fff" stroke="#4e4e4e" stroke-width="1.45"/></svg>
<svg class="ab" style="left:436.5px;top:602.0px" width="13" height="13" viewBox="0 0 13 13"><circle cx="6.5" cy="6.5" r="5.6" fill="#fff" stroke="#4e4e4e" stroke-width="1.45"/></svg>
<svg class="ab" style="left:463.0px;top:602.0px" width="13" height="13" viewBox="0 0 13 13"><circle cx="6.5" cy="6.5" r="5.6" fill="#fff" stroke="#1a74d0" stroke-width="1.5"/><circle cx="6.5" cy="6.5" r="2.4" fill="#1a1a1a"/></svg>
<div class="row" style="left:1px;top:617.0px;width:402px;background:#c7e3fa;"></div>
<div class="ab" style="left:28px;top:619px;line-height:0"><svg width="11" height="12" viewBox="0 0 11 12" style="opacity:1;display:block"><rect x="0.5" y="0.5" width="10" height="11" rx="1.2" fill="#fdf9c0" stroke="#5b86cc" stroke-width="1"/><path d="M10.5 1.5 V10.5 Q10.5 11.5 9.5 11.5 H1.5" fill="none" stroke="#2a5cb0" stroke-width="1"/><path d="M4.6 3.2 V9.3 M4.6 3.2 H8.4 M4.6 5.3 H8.4 M4.6 7.3 H8.4 M4.6 9.3 H8.4 M1.8 6.3 H4.6" fill="none" stroke="#2a5cb0" stroke-width="0.95"/></svg></div>
<div class="ab" style="left:16px;top:623.0px;line-height:0"><svg width="6" height="3.5" viewBox="0 0 6 3.5" style="display:block"><path d="M0 0 H6 L3 3.5 Z" fill="#555"/></svg></div>
<div class="t " style="left:43.5px;top:620.0px;color:#383838">structVar  (1×1 struct)</div>
<svg class="ab" style="left:387px;top:619.5px" width="12" height="13" viewBox="0 0 12 13"><path d="M6 3.1 V8.9 M3.5 5.6 H8.5" stroke="#8a8a8a" stroke-width="0.9"/><rect x="4.4" y="0.7" width="3.2" height="2.5" rx="0.9" fill="#e6e6e6" stroke="#8a8a8a" stroke-width="0.9"/><rect x="0.6" y="4.2" width="3" height="2.8" rx="0.9" fill="#e6e6e6" stroke="#8a8a8a" stroke-width="0.9"/><rect x="8.4" y="4.2" width="3" height="2.8" rx="0.9" fill="#e6e6e6" stroke="#8a8a8a" stroke-width="0.9"/><rect x="4.4" y="8.9" width="3.2" height="3" rx="0.9" fill="#f6c8c8" stroke="#b51d1d" stroke-width="1.1"/></svg>
<svg class="ab" style="left:410.5px;top:618.5px" width="13" height="13" viewBox="0 0 13 13"><circle cx="6.5" cy="6.5" r="5.6" fill="#fff" stroke="#4e4e4e" stroke-width="1.45"/></svg>
<svg class="ab" style="left:436.5px;top:618.5px" width="13" height="13" viewBox="0 0 13 13"><circle cx="6.5" cy="6.5" r="5.6" fill="#fff" stroke="#4e4e4e" stroke-width="1.45"/></svg>
<svg class="ab" style="left:463.0px;top:618.5px" width="13" height="13" viewBox="0 0 13 13"><circle cx="6.5" cy="6.5" r="5.6" fill="#fff" stroke="#1a74d0" stroke-width="1.5"/><circle cx="6.5" cy="6.5" r="2.4" fill="#1a1a1a"/></svg>
<div class="row" style="left:1px;top:633.5px;width:402px;background:#c7e3fa;"></div>
<div class="ab" style="left:41.5px;top:636px;line-height:0"><svg width="11" height="12" viewBox="0 0 11 12" style="opacity:1;display:block"><rect x="0.5" y="0.5" width="10" height="11" rx="1.2" fill="#fdf9c0" stroke="#5b86cc" stroke-width="1"/><path d="M10.5 1.5 V10.5 Q10.5 11.5 9.5 11.5 H1.5" fill="none" stroke="#2a5cb0" stroke-width="1"/><path d="M5.5 1 V11 M1 5.5 H10" stroke="#3a74c8" stroke-width="1"/></svg></div>
<div class="t " style="left:57.0px;top:636.5px;color:#383838">field1  (1×1 double)</div>
<div class="row" style="left:1px;top:650.0px;width:402px;background:#c7e3fa;"></div>
<div class="ab" style="left:41.5px;top:652px;line-height:0"><svg width="11" height="12" viewBox="0 0 11 12" style="opacity:0.72;display:block"><rect x="0.5" y="0.5" width="10" height="11" rx="1.2" fill="#fdf9c0" stroke="#5b86cc" stroke-width="1"/><path d="M10.5 1.5 V10.5 Q10.5 11.5 9.5 11.5 H1.5" fill="none" stroke="#2a5cb0" stroke-width="1"/><path d="M5 5.5 Q4.6 5.0 3.9 5.0 Q2.6 5.0 2.6 6.8 Q2.6 8.6 3.9 8.6 Q4.6 8.6 5 8.1 M6.1 3.3 V8.7 M6.1 6.0 Q6.5 5.0 7.4 5.0 Q8.4 5.0 8.4 6.2 V8.7" fill="none" stroke="#2a5cb0" stroke-width="1.1"/></svg></div>
<div class="t strike" style="left:57.0px;top:653.0px;color:#777">field1  (1×1 char)</div>
<div class="row" style="left:1px;top:666.5px;width:402px;background:#c7e3fa;"></div>
<div class="ab" style="left:41.5px;top:669px;line-height:0"><svg width="11" height="12" viewBox="0 0 11 12" style="opacity:1;display:block"><rect x="0.5" y="0.5" width="10" height="11" rx="1.2" fill="#fdf9c0" stroke="#5b86cc" stroke-width="1"/><path d="M10.5 1.5 V10.5 Q10.5 11.5 9.5 11.5 H1.5" fill="none" stroke="#2a5cb0" stroke-width="1"/><path d="M5 5.5 Q4.6 5.0 3.9 5.0 Q2.6 5.0 2.6 6.8 Q2.6 8.6 3.9 8.6 Q4.6 8.6 5 8.1 M6.1 3.3 V8.7 M6.1 6.0 Q6.5 5.0 7.4 5.0 Q8.4 5.0 8.4 6.2 V8.7" fill="none" stroke="#2a5cb0" stroke-width="1.1"/></svg></div>
<div class="t " style="left:57.0px;top:669.5px;color:#383838">field2  (1×4 char)</div>
<div class="row" style="left:1px;top:683.0px;width:402px;background:#c7e3fa;"></div>
<div class="ab" style="left:41.5px;top:685px;line-height:0"><svg width="11" height="12" viewBox="0 0 11 12" style="opacity:1;display:block"><rect x="0.5" y="0.5" width="10" height="11" rx="1.2" fill="#fdf9c0" stroke="#5b86cc" stroke-width="1"/><path d="M10.5 1.5 V10.5 Q10.5 11.5 9.5 11.5 H1.5" fill="none" stroke="#2a5cb0" stroke-width="1"/><path d="M5.5 1 V11 M1 5.5 H10" stroke="#3a74c8" stroke-width="1"/></svg></div>
<div class="t " style="left:57.0px;top:686.0px;color:#383838">field3  (2×2 double)</div>
<div class="row" style="left:1px;top:699.5px;width:402px;background:#fde0e0;"></div>
<div class="ab" style="left:28px;top:702px;line-height:0"><svg width="11" height="12" viewBox="0 0 11 12" style="opacity:1;display:block"><rect x="0.5" y="0.5" width="10" height="11" rx="1.2" fill="#fdf9c0" stroke="#5b86cc" stroke-width="1"/><path d="M10.5 1.5 V10.5 Q10.5 11.5 9.5 11.5 H1.5" fill="none" stroke="#2a5cb0" stroke-width="1"/><path d="M3.8 5.4 Q3.5 5.0 2.9 5.0 Q2.1 5.0 2.1 5.8 Q2.1 6.5 3.0 6.7 Q3.8 6.9 3.8 7.6 Q3.8 8.5 2.9 8.5 Q2.3 8.5 1.9 8.1 M5.3 3.8 V7.8 Q5.3 8.5 6.1 8.4 M4.5 5.2 H6.3 M7.3 5.0 V8.7 M7.3 6.3 Q7.7 5.0 9.0 5.0" fill="none" stroke="#2a5cb0" stroke-width="0.9"/></svg></div>
<div class="t " style="left:43.5px;top:702.5px;color:#383838">stringVar  (1×1 string)</div>
<svg class="ab" style="left:387px;top:702.0px" width="12" height="13" viewBox="0 0 12 13"><path d="M6 3.1 V8.9 M3.5 5.6 H8.5" stroke="#8a8a8a" stroke-width="0.9"/><rect x="4.4" y="0.7" width="3.2" height="2.5" rx="0.9" fill="#e6e6e6" stroke="#8a8a8a" stroke-width="0.9"/><rect x="0.6" y="4.2" width="3" height="2.8" rx="0.9" fill="#e6e6e6" stroke="#8a8a8a" stroke-width="0.9"/><rect x="8.4" y="4.2" width="3" height="2.8" rx="0.9" fill="#e6e6e6" stroke="#8a8a8a" stroke-width="0.9"/><rect x="4.4" y="8.9" width="3.2" height="3" rx="0.9" fill="#f6c8c8" stroke="#b51d1d" stroke-width="1.1"/></svg>
<svg class="ab" style="left:410.5px;top:701.0px" width="13" height="13" viewBox="0 0 13 13"><circle cx="6.5" cy="6.5" r="5.6" fill="#fff" stroke="#4e4e4e" stroke-width="1.45"/></svg>
<svg class="ab" style="left:436.5px;top:701.0px" width="13" height="13" viewBox="0 0 13 13"><circle cx="6.5" cy="6.5" r="5.6" fill="#fff" stroke="#4e4e4e" stroke-width="1.45"/></svg>
<svg class="ab" style="left:463.0px;top:701.0px" width="13" height="13" viewBox="0 0 13 13"><circle cx="6.5" cy="6.5" r="5.6" fill="#fff" stroke="#1a74d0" stroke-width="1.5"/><circle cx="6.5" cy="6.5" r="2.4" fill="#1a1a1a"/></svg>
<div class="row" style="left:1px;top:716.0px;width:402px;background:#fde0e0;"></div>
<div class="ab" style="left:28px;top:718px;line-height:0"><svg width="11" height="12" viewBox="0 0 11 12" style="opacity:1;display:block"><rect x="0.5" y="0.5" width="10" height="11" rx="1.2" fill="#fdf9c0" stroke="#5b86cc" stroke-width="1"/><path d="M10.5 1.5 V10.5 Q10.5 11.5 9.5 11.5 H1.5" fill="none" stroke="#2a5cb0" stroke-width="1"/><path d="M5.5 1 V11 M1 5.5 H10" stroke="#3a74c8" stroke-width="1"/></svg></div>
<div class="t " style="left:43.5px;top:719.0px;color:#383838">vectorVar  (1×10 double)</div>
<svg class="ab" style="left:387px;top:718.5px" width="12" height="13" viewBox="0 0 12 13"><path d="M6 3.1 V8.9 M3.5 5.6 H8.5" stroke="#8a8a8a" stroke-width="0.9"/><rect x="4.4" y="0.7" width="3.2" height="2.5" rx="0.9" fill="#e6e6e6" stroke="#8a8a8a" stroke-width="0.9"/><rect x="0.6" y="4.2" width="3" height="2.8" rx="0.9" fill="#e6e6e6" stroke="#8a8a8a" stroke-width="0.9"/><rect x="8.4" y="4.2" width="3" height="2.8" rx="0.9" fill="#e6e6e6" stroke="#8a8a8a" stroke-width="0.9"/><rect x="4.4" y="8.9" width="3.2" height="3" rx="0.9" fill="#f6c8c8" stroke="#b51d1d" stroke-width="1.1"/></svg>
<svg class="ab" style="left:410.5px;top:717.5px" width="13" height="13" viewBox="0 0 13 13"><circle cx="6.5" cy="6.5" r="5.6" fill="#fff" stroke="#4e4e4e" stroke-width="1.45"/></svg>
<svg class="ab" style="left:436.5px;top:717.5px" width="13" height="13" viewBox="0 0 13 13"><circle cx="6.5" cy="6.5" r="5.6" fill="#fff" stroke="#4e4e4e" stroke-width="1.45"/></svg>
<svg class="ab" style="left:463.0px;top:717.5px" width="13" height="13" viewBox="0 0 13 13"><circle cx="6.5" cy="6.5" r="5.6" fill="#fff" stroke="#1a74d0" stroke-width="1.5"/><circle cx="6.5" cy="6.5" r="2.4" fill="#1a1a1a"/></svg>
<div style="position:absolute;left:1px;top:549px;width:769px;height:2px;background:#0a7a0a;"></div>
<div style="position:absolute;left:483px;top:551px;width:12px;height:183px;background:#f0f0f0;"></div>
<svg class="ab" style="left:485.5px;top:555px" width="7" height="4" viewBox="0 0 7 4"><path d="M0 4 L3.5 0 L7 4 Z" fill="#b5b5b5"/></svg>
<svg class="ab" style="left:485.5px;top:725px" width="7" height="4" viewBox="0 0 7 4"><path d="M0 0 L3.5 4 L7 0 Z" fill="#555"/></svg>
<div style="position:absolute;left:484px;top:564px;width:10px;height:134px;background:#c1c1c1;"></div>
<div style="position:absolute;left:495px;top:551px;width:1px;height:183px;background:#d0d0d0;"></div>
<div style="position:absolute;left:496px;top:551px;width:274px;height:183px;background:#f3f3f3;"></div>
<div style="position:absolute;left:0px;top:734px;width:770px;height:2px;background:#9a9a9a;"></div>
<svg class="ab" style="left:511px;top:567px" width="12" height="12" viewBox="0 0 12 12">
<path d="M3.5 0 H8.5 L12 3.5 V8.5 L8.5 12 H3.5 L0 8.5 V3.5 Z" fill="#b62b2b"/><path d="M6 2.4 V7" stroke="#fff" stroke-width="1.9"/><rect x="5.05" y="8.2" width="1.9" height="1.7" fill="#fff"/></svg>
<div class="t" style="left:527px;top:567px;font-weight:bold;font-size:10.4px;letter-spacing:0.05px;color:#222;">6 unresolved changes of which 0 are filtered</div>
<div style="position:absolute;left:511px;top:583px;width:243px;height:120px;background:#fff;border:1px solid #c8c8c8;box-sizing:border-box;"></div>
<div style="position:absolute;left:512px;top:600px;width:241px;height:18px;background:#f4f4f4;"></div>
<div style="position:absolute;left:512px;top:584px;width:241px;height:15px;background:#e0e0e0;"></div>
<div style="position:absolute;left:512px;top:584px;width:76px;height:15px;background:#fff;"></div>
<div style="position:absolute;left:588px;top:584px;width:73px;height:15px;background:#c9c9c9;"></div>
<div class="t" style="left:515px;top:584.5px;font-size:9.8px;color:#222;">Filtered view (6)</div>
<div class="t" style="left:592.5px;top:584.5px;font-size:9.8px;color:#222;">All changes (6)</div>
<div style="position:absolute;left:512px;top:599px;width:241px;height:1px;background:#d0d0d0;"></div>
<div class="t" style="left:516.5px;top:604px;font-size:6.8px;color:#333;">TYPE</div>
<div class="t" style="left:640px;top:604px;font-size:6.8px;color:#333;">UNRESOLVED</div>
<div class="t" style="left:705.5px;top:604px;font-size:6.8px;color:#333;letter-spacing:-0.1px;">RESOLVED</div>
<div style="position:absolute;left:512px;top:617.5px;width:241px;height:2px;background:#c8c8c8;"></div>
<div style="position:absolute;left:512px;top:619.5px;width:241px;height:16.5px;background:#fff;"></div>
<div class="t" style="left:530.5px;top:622.7px;font-size:9.6px;color:#333;letter-spacing:-0.25px;">Conflict</div>
<div class="t" style="left:643.5px;width:40px;text-align:center;top:622.7px;font-size:9.6px;color:#333;">6</div>
<div class="t" style="left:703.5px;width:40px;text-align:center;top:622.7px;font-size:9.6px;color:#333;">1</div>
<div style="position:absolute;left:512px;top:636.0px;width:241px;height:16.5px;background:#f3f3f3;"></div>
<div class="t" style="left:530.5px;top:639.2px;font-size:9.6px;color:#333;letter-spacing:-0.25px;">Conflicted manual merge</div>
<div class="t" style="left:643.5px;width:40px;text-align:center;top:639.2px;font-size:9.6px;color:#333;">0</div>
<div class="t" style="left:703.5px;width:40px;text-align:center;top:639.2px;font-size:9.6px;color:#333;">0</div>
<div style="position:absolute;left:512px;top:652.5px;width:241px;height:16.5px;background:#fff;"></div>
<div class="t" style="left:530.5px;top:655.7px;font-size:9.6px;color:#333;letter-spacing:-0.25px;">Manual merge</div>
<div class="t" style="left:643.5px;width:40px;text-align:center;top:655.7px;font-size:9.6px;color:#333;">0</div>
<div class="t" style="left:703.5px;width:40px;text-align:center;top:655.7px;font-size:9.6px;color:#333;">0</div>
<div style="position:absolute;left:512px;top:669.0px;width:241px;height:16.5px;background:#f3f3f3;"></div>
<div class="t" style="left:530.5px;top:672.2px;font-size:9.6px;color:#333;letter-spacing:-0.25px;">Automatic</div>
<div class="t" style="left:643.5px;width:40px;text-align:center;top:672.2px;font-size:9.6px;color:#333;">0</div>
<div class="t" style="left:703.5px;width:40px;text-align:center;top:672.2px;font-size:9.6px;color:#333;">6</div>
<div style="position:absolute;left:512px;top:685.5px;width:241px;height:16.5px;background:#fff;"></div>
<div class="t" style="left:530.5px;top:688.7px;font-weight:bold;font-size:9.6px;color:#333;letter-spacing:-0.25px;">Total</div>
<div class="t" style="left:643.5px;width:40px;text-align:center;top:688.7px;font-weight:bold;font-size:9.6px;color:#333;">6</div>
<div class="t" style="left:703.5px;width:40px;text-align:center;top:688.7px;font-weight:bold;font-size:9.6px;color:#333;">7</div>
<svg class="ab" style="left:514.5px;top:622px" width="12" height="13" viewBox="0 0 12 13"><path d="M6 3.1 V8.9 M3.5 5.6 H8.5" stroke="#8a8a8a" stroke-width="0.9"/><rect x="4.4" y="0.7" width="3.2" height="2.5" rx="0.9" fill="#e6e6e6" stroke="#8a8a8a" stroke-width="0.9"/><rect x="0.6" y="4.2" width="3" height="2.8" rx="0.9" fill="#e6e6e6" stroke="#8a8a8a" stroke-width="0.9"/><rect x="8.4" y="4.2" width="3" height="2.8" rx="0.9" fill="#e6e6e6" stroke="#8a8a8a" stroke-width="0.9"/><rect x="4.4" y="8.9" width="3.2" height="3" rx="0.9" fill="#f6c8c8" stroke="#b51d1d" stroke-width="1.1"/></svg>
<svg class="ab" style="left:514.5px;top:637.5px" width="12" height="13" viewBox="0 0 12 13"><path d="M6 3.1 V8.9 M3.5 5.6 H8.5" stroke="#8a8a8a" stroke-width="0.9"/><rect x="4.4" y="0.7" width="3.2" height="2.5" rx="0.9" fill="#f0f0f0" stroke="#8a8a8a" stroke-width="0.9"/><rect x="0.6" y="4.2" width="3" height="2.8" rx="0.9" fill="#f0f0f0" stroke="#8a8a8a" stroke-width="0.9"/><rect x="8.4" y="4.2" width="3" height="2.8" rx="0.9" fill="#f0f0f0" stroke="#8a8a8a" stroke-width="0.9"/><rect x="4.4" y="8.9" width="3.2" height="3" rx="0.9" fill="#ddd" stroke="#777" stroke-width="1.1"/></svg>
<svg class="ab" style="left:515.5px;top:639.0px" width="12" height="13" viewBox="0 0 12 13"><path d="M6 3.1 V8.9 M3.5 5.6 H8.5" stroke="#8a8a8a" stroke-width="0.9"/><rect x="4.4" y="0.7" width="3.2" height="2.5" rx="0.9" fill="#f0f0f0" stroke="#8a8a8a" stroke-width="0.9"/><rect x="0.6" y="4.2" width="3" height="2.8" rx="0.9" fill="#f0f0f0" stroke="#8a8a8a" stroke-width="0.9"/><rect x="8.4" y="4.2" width="3" height="2.8" rx="0.9" fill="#f0f0f0" stroke="#8a8a8a" stroke-width="0.9"/><rect x="4.4" y="8.9" width="3.2" height="3" rx="0.9" fill="#f6c8c8" stroke="#b51d1d" stroke-width="1.1"/></svg>
<svg class="ab" style="left:519px;top:643.5px" width="9" height="8" viewBox="0 0 9 8"><path d="M0.8 7.4 L1.6 5.2 L6.2 0.8 L8.2 2.6 L3.4 6.8 Z" fill="#f0c828" stroke="#7a5a10" stroke-width="0.6"/><path d="M6.2 0.8 L8.2 2.6 L8.6 1.6 L7.2 0.4 Z" fill="#e05050"/></svg>
<svg class="ab" style="left:514.5px;top:654.0px" width="12" height="13" viewBox="0 0 12 13"><path d="M6 3.1 V8.9 M3.5 5.6 H8.5" stroke="#8a8a8a" stroke-width="0.9"/><rect x="4.4" y="0.7" width="3.2" height="2.5" rx="0.9" fill="#f0f0f0" stroke="#8a8a8a" stroke-width="0.9"/><rect x="0.6" y="4.2" width="3" height="2.8" rx="0.9" fill="#f0f0f0" stroke="#8a8a8a" stroke-width="0.9"/><rect x="8.4" y="4.2" width="3" height="2.8" rx="0.9" fill="#f0f0f0" stroke="#8a8a8a" stroke-width="0.9"/><rect x="4.4" y="8.9" width="3.2" height="3" rx="0.9" fill="#ddd" stroke="#777" stroke-width="1.1"/></svg>
<svg class="ab" style="left:515.5px;top:655.5px" width="12" height="13" viewBox="0 0 12 13"><path d="M6 3.1 V8.9 M3.5 5.6 H8.5" stroke="#8a8a8a" stroke-width="0.9"/><rect x="4.4" y="0.7" width="3.2" height="2.5" rx="0.9" fill="#f0f0f0" stroke="#8a8a8a" stroke-width="0.9"/><rect x="0.6" y="4.2" width="3" height="2.8" rx="0.9" fill="#f0f0f0" stroke="#8a8a8a" stroke-width="0.9"/><rect x="8.4" y="4.2" width="3" height="2.8" rx="0.9" fill="#f0f0f0" stroke="#8a8a8a" stroke-width="0.9"/><rect x="4.4" y="8.9" width="3.2" height="3" rx="0.9" fill="#ddd" stroke="#777" stroke-width="1.1"/></svg>
<svg class="ab" style="left:519px;top:660.0px" width="9" height="8" viewBox="0 0 9 8"><path d="M0.8 7.4 L1.6 5.2 L6.2 0.8 L8.2 2.6 L3.4 6.8 Z" fill="#f0c828" stroke="#7a5a10" stroke-width="0.6"/><path d="M6.2 0.8 L8.2 2.6 L8.6 1.6 L7.2 0.4 Z" fill="#e05050"/></svg>
<div style="position:absolute;left:0px;top:0px;width:1px;height:736px;background:#9a9a9a;"></div>
<div style="position:absolute;left:769px;top:0px;width:1px;height:736px;background:#9a9a9a;"></div>
<div style="position:absolute;left:0px;top:0px;width:770px;height:1px;background:#9a9a9a;"></div>
</body></html>
